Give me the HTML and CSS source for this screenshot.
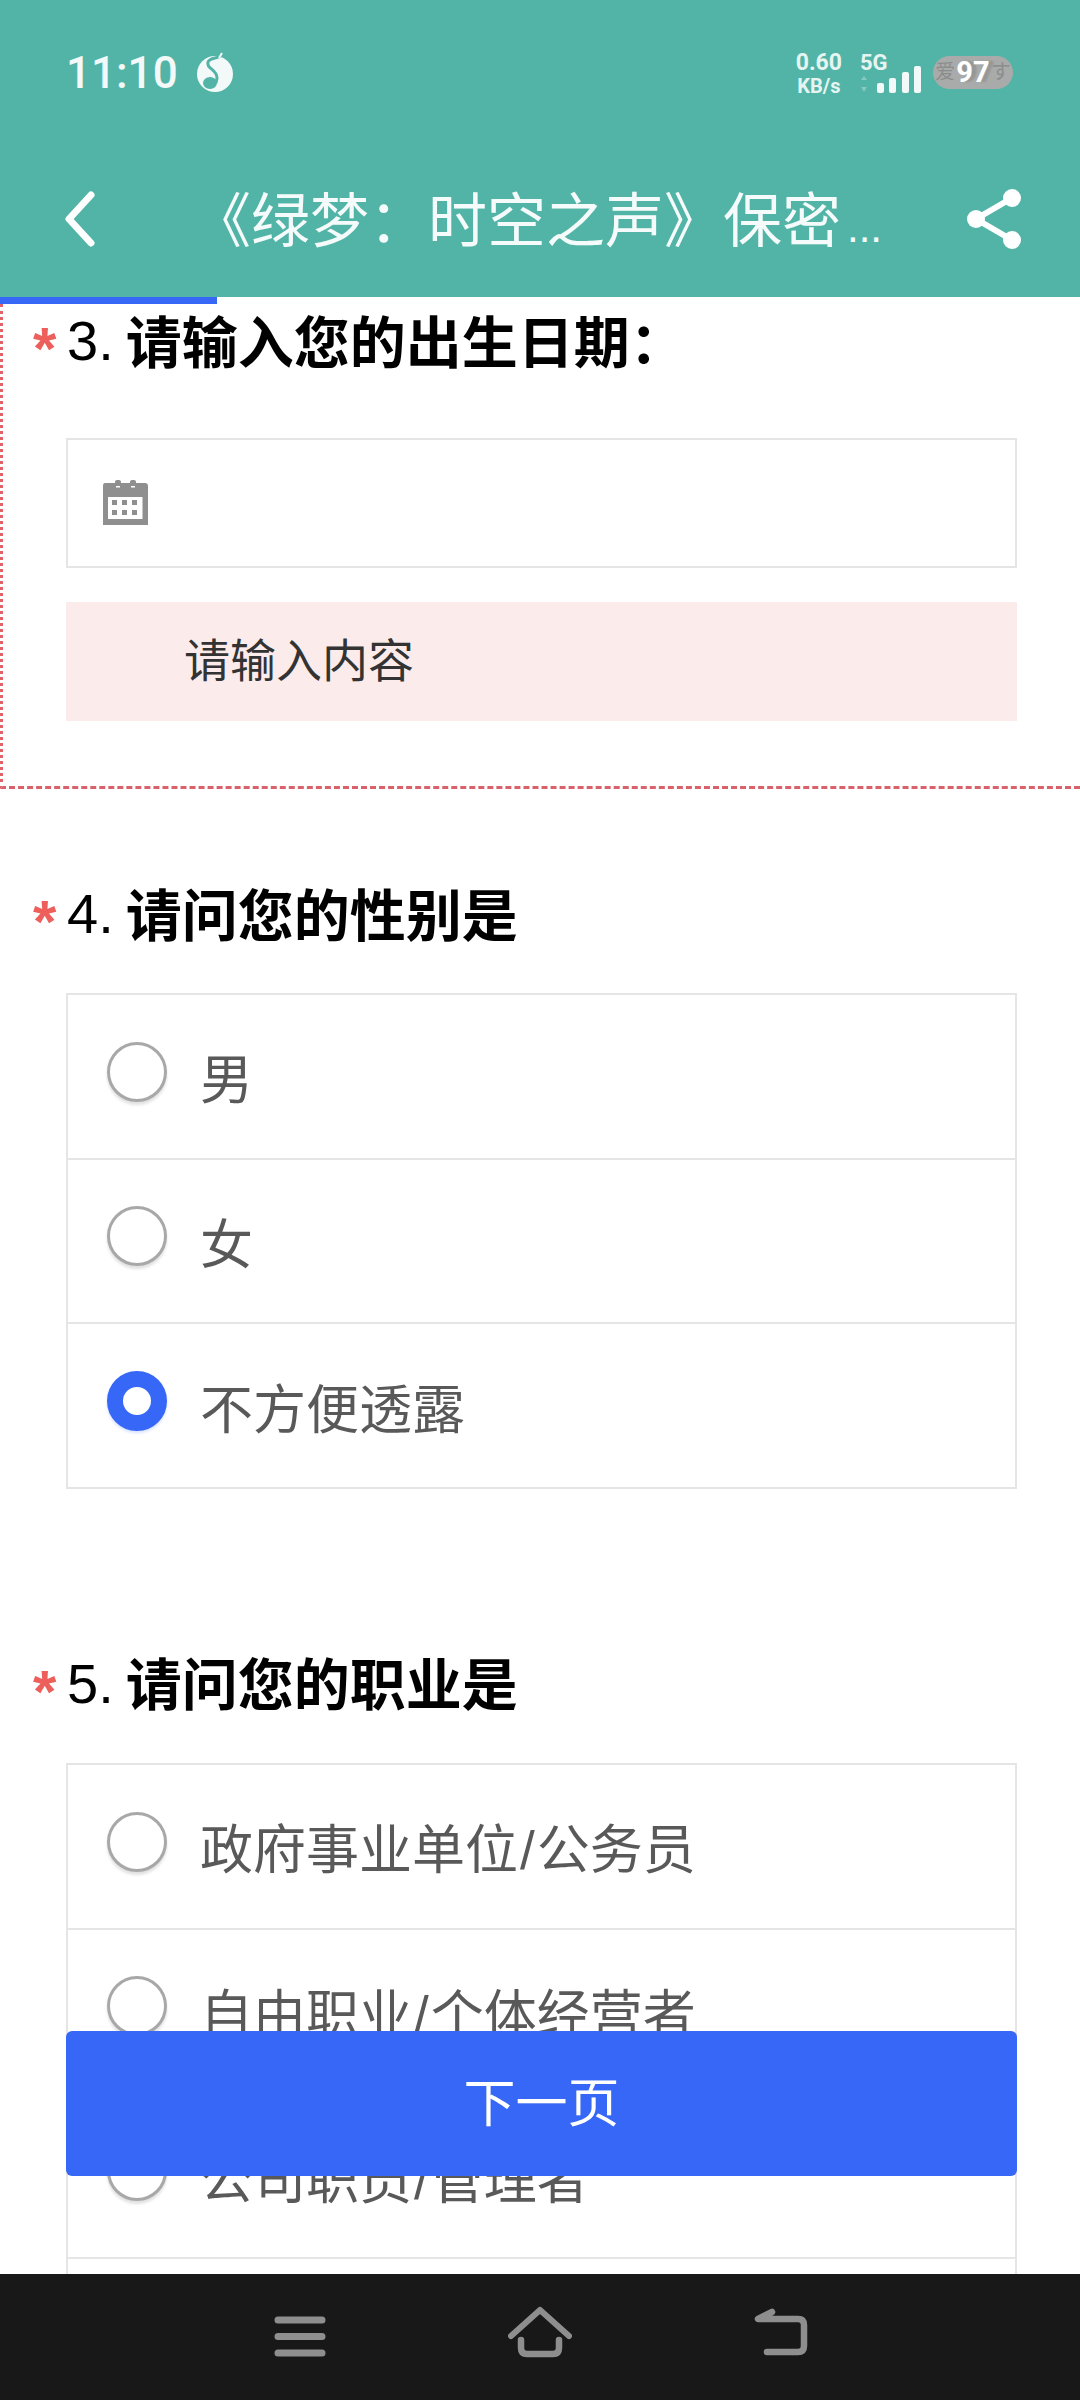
FILE: index.html
```html
<!DOCTYPE html>
<html lang="zh-CN">
<head>
    <meta charset="UTF-8">
    <meta name="viewport" content="width=device-width, initial-scale=1.0">
    <title>绿梦：时空之声</title>
    <link rel="stylesheet" href="styles.css">
</head>
<body>
    <header class="header">
        <div class="status-bar">
            <span class="time">11:10</span>
            <svg class="music-icon" width="42" height="42" viewBox="0 0 42 42">
                <circle cx="22" cy="22" r="18" fill="#f3f9f8"/>
                <path d="M29 3 C25 7 17 5 15 10 C13 17 24 17 24 26 L23 31" fill="none" stroke="#52b4a6" stroke-width="3"/>
                <path d="M29 1 L26 6" fill="none" stroke="#f3f9f8" stroke-width="2"/>
                <ellipse cx="17" cy="31" rx="7" ry="6" fill="#52b4a6"/>
            </svg>
            <div class="status-right">
                <div class="net-speed">
                    <span class="net-value">0.60</span>
                    <span class="net-unit">KB/s</span>
                </div>
                <svg class="signal-icon" width="64" height="42" viewBox="0 0 64 42">
                    <text x="1" y="19" class="signal-text">5G</text>
                    <path d="M5 25 L8 29 L2 29 Z M5 41 L8 36 L2 36 Z" fill="#86c9be"/>
                    <rect x="18" y="32" width="7" height="10" rx="2" fill="#f3f9f8"/>
                    <rect x="30" y="27" width="7" height="15" rx="2" fill="#f3f9f8"/>
                    <rect x="43" y="21" width="7" height="21" rx="2" fill="#f3f9f8"/>
                    <rect x="55" y="15" width="7" height="27" rx="2" fill="#f3f9f8"/>
                </svg>
                <div class="battery">
                    <span class="battery-ghost">爱</span>
                    <span class="battery-num">97</span>
                    <span class="battery-ghost">す</span>
                </div>
            </div>
        </div>
        <div class="title-bar">
            <svg class="back-icon" width="32" height="56" viewBox="0 0 32 56">
                <path d="M27 4 L5 28 L27 52" fill="none" stroke="#fff" stroke-width="7" stroke-linecap="round" stroke-linejoin="round"/>
            </svg>
            <div class="page-title">《绿梦：时空之声》保密<span class="dots">...</span></div>
            <svg class="share-icon" width="60" height="64" viewBox="0 0 60 64">
                <path d="M48 11 L12 32 L48 53" fill="none" stroke="#fff" stroke-width="6"/>
                <circle cx="48" cy="11" r="9" fill="#fff"/>
                <circle cx="12" cy="32" r="9" fill="#fff"/>
                <circle cx="48" cy="53" r="9" fill="#fff"/>
            </svg>
        </div>
    </header>
    <div class="progress"><div class="progress-fill"></div></div>

    <main class="content">
        <section class="question question-error">
            <div class="q-title"><span class="star">*</span><span class="q-num">3.</span><b>请输入您的出生日期：</b></div>
            <div class="date-input">
                <svg width="46" height="46" viewBox="0 0 46 46">
                    <path d="M3 3 H43 Q46 3 46 6 V45 H1 V6 Q1 3 3 3 Z" fill="#8f8f8f"/>
                    <rect x="13" y="0" width="6" height="7" rx="2" fill="#8f8f8f"/>
                    <rect x="28" y="0" width="6" height="7" rx="2" fill="#8f8f8f"/>
                    <rect x="14" y="6" width="4" height="1.5" fill="#fff"/>
                    <rect x="29" y="6" width="4" height="1.5" fill="#fff"/>
                    <rect x="6" y="17" width="34.500" height="22" fill="#fff"/>
                    <path d="M10 20 h5 v5 h-5 Z M20 20 h5 v5 h-5 Z M30 20 h5 v5 h-5 Z M10 30 h5 v5 h-5 Z M20 30 h5 v5 h-5 Z M30 30 h5 v5 h-5 Z" fill="#8f8f8f"/>
                </svg>
            </div>
            <div class="error-msg">请输入内容</div>
        </section>

        <section class="question">
            <div class="q-title"><span class="star">*</span><span class="q-num">4.</span><b>请问您的性别是</b></div>
            <div class="options">
                <div class="option"><span class="radio"></span><span class="option-text">男</span></div>
                <div class="option"><span class="radio"></span><span class="option-text">女</span></div>
                <div class="option"><span class="radio checked"></span><span class="option-text">不方便透露</span></div>
            </div>
        </section>

        <section class="question question-next">
            <div class="q-title"><span class="star">*</span><span class="q-num">5.</span><b>请问您的职业是</b></div>
            <div class="options">
                <div class="option"><span class="radio"></span><span class="option-text">政府事业单位<span class="slash">/</span>公务员</span></div>
                <div class="option"><span class="radio"></span><span class="option-text">自由职业<span class="slash">/</span>个体经营者</span></div>
                <div class="option"><span class="radio"></span><span class="option-text">公司职员<span class="slash">/</span>管理者</span></div>
                <div class="option"></div>
            </div>
        </section>

        <button class="next-btn">下一页</button>
    </main>

    <nav class="nav-bar">
        <svg width="64" height="64" viewBox="0 0 64 64">
            <path d="M10 16 H54 M10 32.500 H54 M10 49 H54" fill="none" stroke="#8e8e8e" stroke-width="7" stroke-linecap="round"/>
        </svg>
        <svg width="64" height="64" viewBox="0 0 64 64">
            <path d="M3 32 L32 6 L61 32" fill="none" stroke="#8e8e8e" stroke-width="6" stroke-linecap="round" stroke-linejoin="round"/>
            <path d="M13 36 V44 Q13 50 19 50 H45 Q51 50 51 44 V36" fill="none" stroke="#8e8e8e" stroke-width="6.500" stroke-linecap="round"/>
        </svg>
        <svg width="64" height="64" viewBox="0 0 64 64">
            <path d="M24 8 L10 15 H50 Q56 15 56 21 V42 Q56 48 50 48 H19" fill="none" stroke="#8e8e8e" stroke-width="6.500" stroke-linecap="round" stroke-linejoin="round"/>
        </svg>
    </nav>
</body>
</html>
```

FILE: styles.css
```css
body {
    margin: 0;
    width: 1080px;
    height: 2400px;
    overflow: hidden;
    display: flex;
    flex-direction: column;
    background-color: #fff;
    font-family: "Liberation Sans", "Noto Sans CJK SC", sans-serif;
}
.header {
    height: 297px;
    flex-shrink: 0;
    background-color: #52b4a6;
    color: #fff;
}
.status-bar {
    height: 140px;
    padding: 48px 67px 0 66px;
    box-sizing: border-box;
    display: flex;
    align-items: flex-start;
}
.time {
    font-family: Roboto, sans-serif;
    font-weight: 500;
    font-size: 44px;
    line-height: 50px;
    color: #f3f9f8;
}
.music-icon {
    margin: 4px 0 0 15px;
}
.status-right {
    margin-left: auto;
    display: flex;
    align-items: flex-start;
}
.net-speed {
    padding-top: 2px;
    display: flex;
    flex-direction: column;
    align-items: center;
    font-family: Roboto, sans-serif;
    font-weight: 700;
    color: #e6f5f2;
}
.net-value {
    font-size: 23px;
    line-height: 25px;
}
.net-unit {
    font-size: 20px;
    line-height: 22px;
}
.signal-icon {
    margin: 3px 0 0 17px;
}
.signal-text {
    font-family: Roboto, sans-serif;
    font-weight: 700;
    font-size: 22px;
    fill: #e6f5f2;
}
.battery {
    width: 80px;
    height: 33px;
    margin: 8px 0 0 10px;
    border-radius: 17px;
    background-color: #a9abaa;
    display: flex;
    align-items: center;
    justify-content: center;
    font-family: Roboto, "Noto Sans CJK JP", sans-serif;
}
.battery-ghost {
    font-size: 20px;
    line-height: 33px;
    color: #8b8d8c;
}
.battery-num {
    margin: 0 1px;
    font-size: 29px;
    font-weight: 700;
    line-height: 33px;
    color: #fff;
    text-shadow: 5px 0 2px rgba(120, 120, 120, 0.4);
}
.title-bar {
    height: 157px;
    padding: 0 56px 0 64px;
    display: flex;
    align-items: center;
    box-sizing: border-box;
}
.page-title {
    margin-left: 96px;
    padding-bottom: 4px;
    flex: 1;
    font-size: 59px;
    white-space: nowrap;
    color: #f5fbfa;
}
.dots {
    margin-left: 6px;
    font-size: 42px;
}
.progress {
    height: 7px;
    flex-shrink: 0;
    background-color: #fff;
}
.progress-fill {
    width: 217px;
    height: 7px;
    background-color: #3767f6;
}
.content {
    position: relative;
    flex: 1;
    overflow: hidden;
}
.question {
    padding: 85px 63px 0 66px;
}
.question-next {
    padding-top: 155px;
}
.question-error {
    height: 485px;
    padding: 1px 63px 0 63px;
    box-sizing: border-box;
    border-left: 3px dotted #e0636a;
    border-bottom: 3px dashed #d9626a;
}
.q-title {
    height: 74px;
    margin-bottom: 45px;
    margin-left: -32px;
    display: flex;
    align-items: center;
    font-size: 56px;
    color: #000;
    white-space: nowrap;
}
.question-error .q-title {
    margin-top: -4px;
    margin-bottom: 63px;
}
.star {
    width: 34px;
    margin-left: -1px;
    padding-top: 22px;
    font-size: 60px;
    font-weight: 700;
    line-height: 50px;
    color: #ec5f5a;
}
.q-num {
    margin-right: 12px;
    padding-top: 5px;
}
.date-input {
    height: 130px;
    padding-left: 34px;
    box-sizing: border-box;
    border: 2px solid #e5e5e5;
    display: flex;
    align-items: center;
}
.error-msg {
    height: 119px;
    margin-top: 34px;
    padding-left: 118px;
    background-color: #fbeceb;
    font-size: 46px;
    line-height: 119px;
    color: #333;
}
.options {
    border: 2px solid #e5e5e5;
    border-bottom-width: 0;
}
.option {
    height: 164.670px;
    box-sizing: border-box;
    padding-left: 39px;
    border-bottom: 2px solid #e5e5e5;
    display: flex;
    align-items: center;
    font-size: 53px;
    color: #595959;
}
.radio {
    width: 60px;
    height: 60px;
    margin-bottom: 9px;
    box-sizing: border-box;
    border: 3px solid #a8a8a8;
    border-radius: 50%;
    box-shadow: 0 3px 3px rgba(0, 0, 0, 0.12);
    background-color: #fff;
    flex-shrink: 0;
}
.radio.checked {
    border: 16px solid #3767f6;
    box-shadow: 0 2px 3px rgba(55, 103, 246, 0.2);
}
.option-text {
    margin-left: 33px;
}
.slash {
    margin: 0 2px;
}
.next-btn {
    position: absolute;
    left: 66px;
    top: 1727px;
    width: 951px;
    height: 145px;
    padding: 0 0 9px;
    border: none;
    border-radius: 6px;
    background-color: #3767f6;
    color: #fff;
    font-family: inherit;
    font-size: 52px;
}
.nav-bar {
    height: 126px;
    flex-shrink: 0;
    box-sizing: border-box;
    padding-bottom: 2px;
    background-color: #181818;
    display: flex;
    align-items: center;
    justify-content: center;
    gap: 176px;
}
```
